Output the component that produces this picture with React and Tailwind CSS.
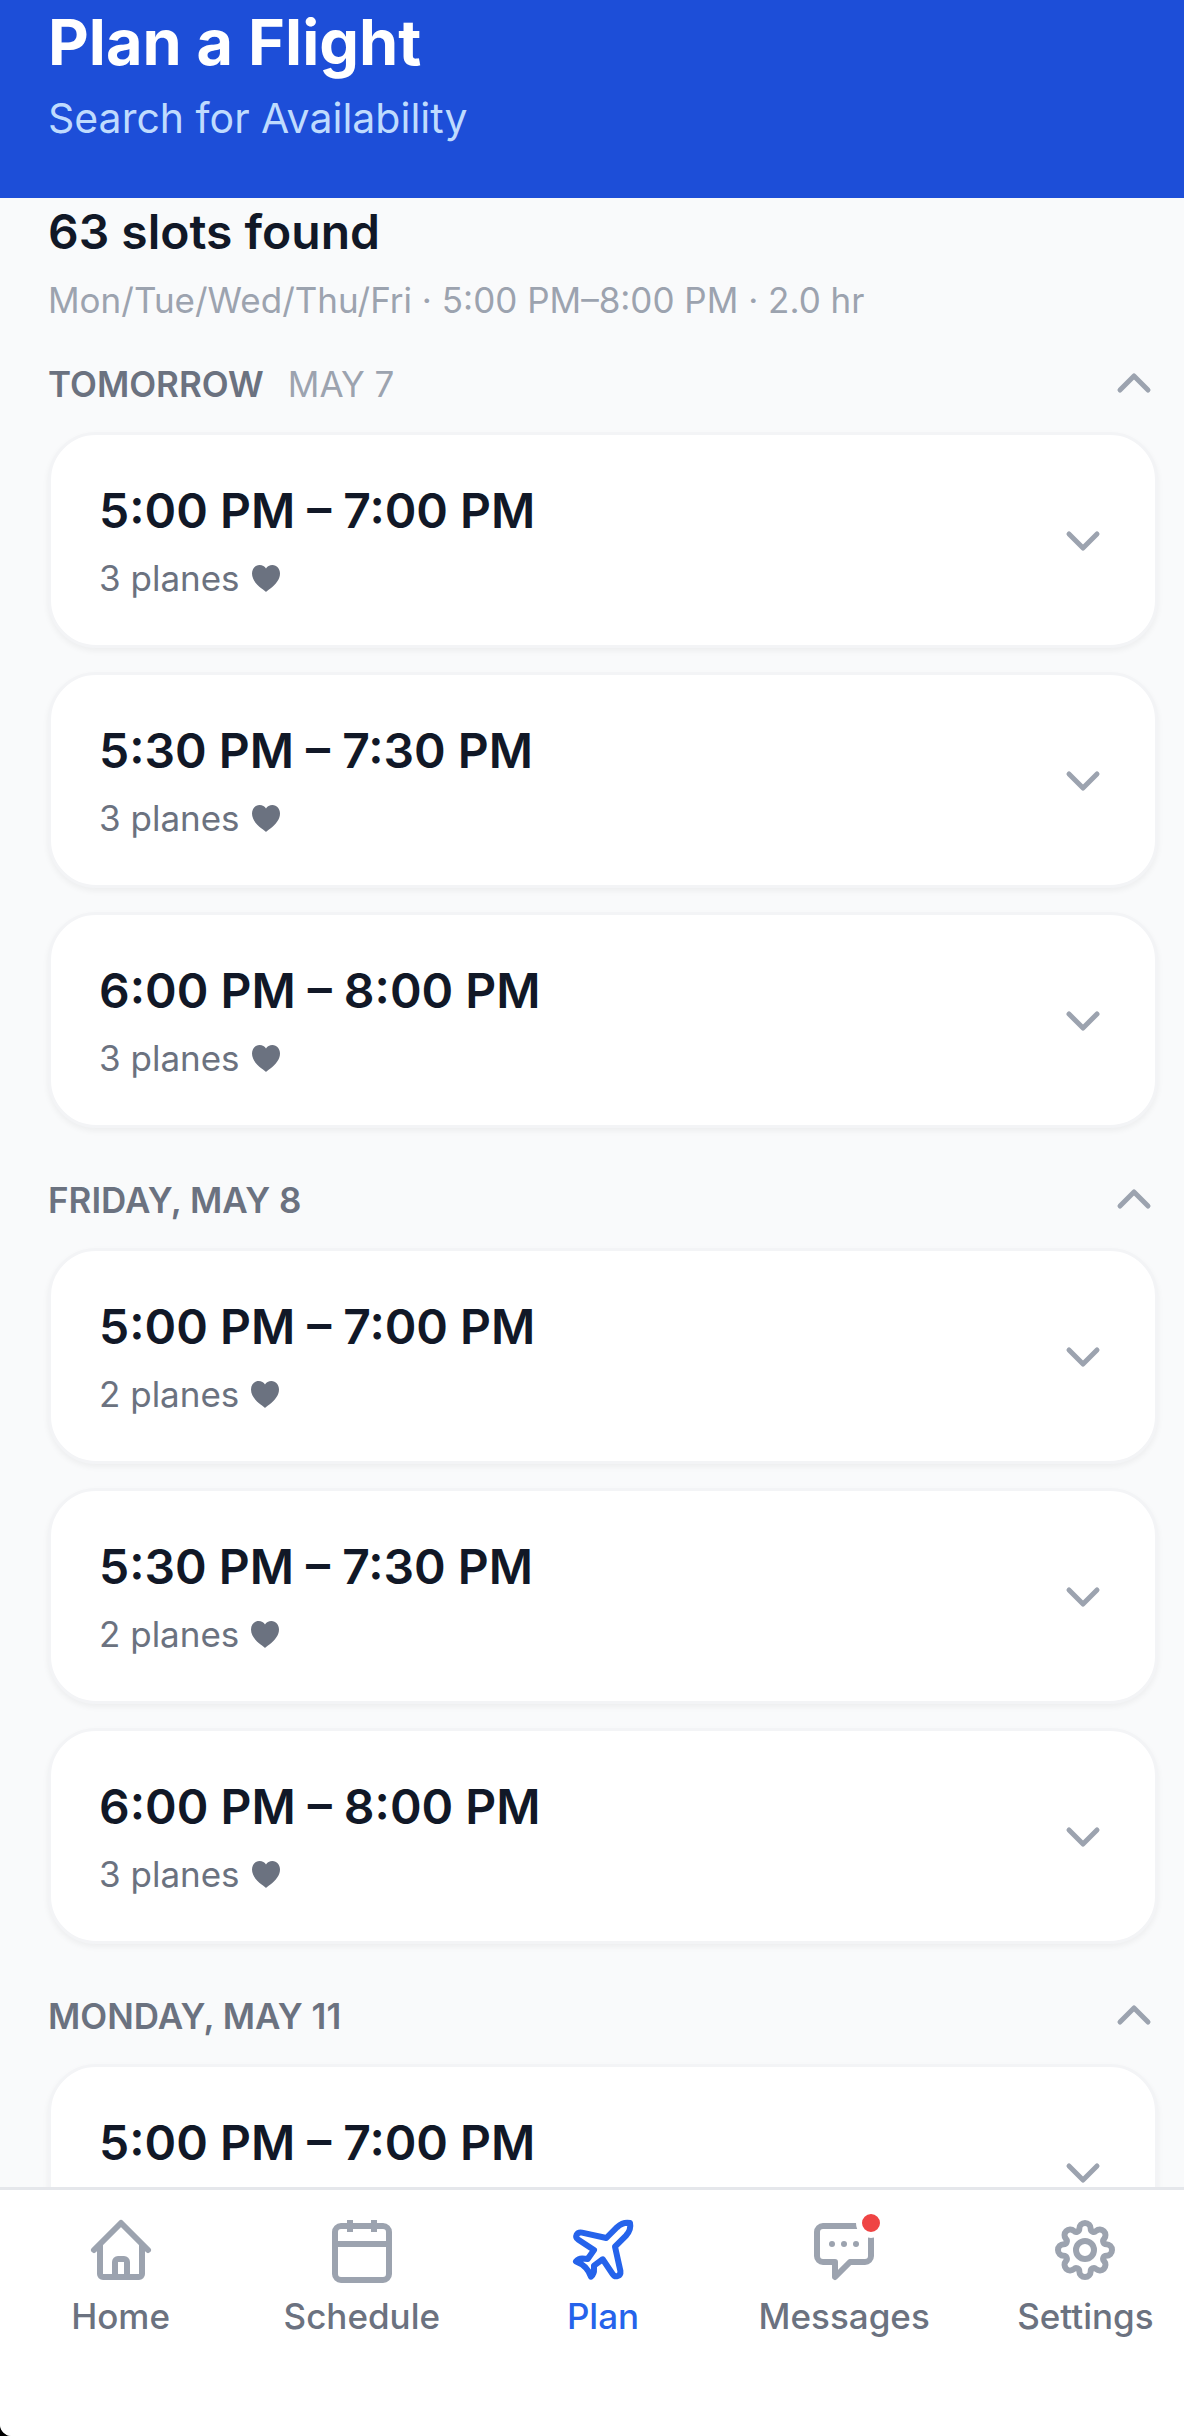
import React, { useState } from "react";

const days = [
    {
        title: "Tomorrow",
        note: "May 7",
        slots: [
            { time: "5:00 PM – 7:00 PM", planes: 3 },
            { time: "5:30 PM – 7:30 PM", planes: 3 },
            { time: "6:00 PM – 8:00 PM", planes: 3 },
        ],
    },
    {
        title: "Friday, May 8",
        slots: [
            { time: "5:00 PM – 7:00 PM", planes: 2 },
            { time: "5:30 PM – 7:30 PM", planes: 2 },
            { time: "6:00 PM – 8:00 PM", planes: 3 },
        ],
    },
    {
        title: "Monday, May 11",
        slots: [{ time: "5:00 PM – 7:00 PM", planes: 3 }],
    },
];

const Icon = ({ children }) => (
    <svg
        viewBox="0 0 24 24"
        className="size-18"
        fill="none"
        stroke="currentColor"
        strokeWidth="2"
        strokeLinejoin="round"
        aria-hidden="true"
    >
        {children}
    </svg>
);

const HomeIcon = () => (
    <Icon>
        <path strokeLinecap="round" d="M3 12l9-9 9 9" />
        <path d="M5 10v10a1 1 0 0 0 1 1h12a1 1 0 0 0 1-1V10" />
        <path d="M10 21v-5a1 1 0 0 1 1-1h2a1 1 0 0 1 1 1v5" />
    </Icon>
);

const ScheduleIcon = () => (
    <Icon>
        <rect x="3" y="4" width="18" height="18" rx="2" />
        <path d="M3 10h18M8 2v4M16 2v4" />
    </Icon>
);

const PlanIcon = () => (
    <Icon>
        <path d="M13.1 8L5 6.2C3.2 5.9 2.4 7.7 3.8 8.6L9 12L6.9 15L5 14.8C4.2 14.8 3.5 15.2 3 15.8C5.6 16.8 7.1 18.2 8 20.9C8.7 20.2 9.1 19.4 9 18.3V17.2L11.9 15.1L15.2 20C16.1 21.4 18 20.7 17.8 19L16 10.9L19.6 7.3C20.9 5.9 21.3 4.3 21 3C19.5 2.7 18.1 3.1 16.7 4.4Z" />
    </Icon>
);

const MessagesIcon = () => (
    <Icon>
        <path d="M5 4h14a2 2 0 0 1 2 2v8a2 2 0 0 1-2 2h-5l-5 5v-5H5a2 2 0 0 1-2-2V6a2 2 0 0 1 2-2z" />
        <g fill="currentColor" stroke="none">
            <circle cx="8" cy="10" r="1" />
            <circle cx="12" cy="10" r="1" />
            <circle cx="16" cy="10" r="1" />
        </g>
    </Icon>
);

const SettingsIcon = () => (
    <Icon>
        <path d="M10.1 4.9A1.9 1.9 0 0 1 13.9 4.9A1.04 1.04 0 0 0 15.68 5.64A1.9 1.9 0 0 1 18.36 8.32A1.04 1.04 0 0 0 19.1 10.1A1.9 1.9 0 0 1 19.1 13.9A1.04 1.04 0 0 0 18.36 15.68A1.9 1.9 0 0 1 15.68 18.36A1.04 1.04 0 0 0 13.9 19.1A1.9 1.9 0 0 1 10.1 19.1A1.04 1.04 0 0 0 8.32 18.36A1.9 1.9 0 0 1 5.64 15.68A1.04 1.04 0 0 0 4.9 13.9A1.9 1.9 0 0 1 4.9 10.1A1.04 1.04 0 0 0 5.64 8.32A1.9 1.9 0 0 1 8.32 5.64A1.04 1.04 0 0 0 10.1 4.9Z" />
        <circle cx="12" cy="12" r="3" />
    </Icon>
);

const Chevron = ({ up }) => (
    <svg
        viewBox="0 0 24 24"
        className="size-12 shrink-0 text-[#9ca3af]"
        fill="none"
        stroke="currentColor"
        strokeWidth="2.5"
        strokeLinecap="round"
        strokeLinejoin="round"
        aria-hidden="true"
    >
        <path d={up ? "M5 15l7-7 7 7" : "M5 9l7 7 7-7"} />
    </svg>
);

const Heart = () => (
    <svg viewBox="0 0 28 27" className="h-[27px] w-7" fill="currentColor" aria-hidden="true">
        <path d="M14 27C13.2 26.2 11.6 25.2 9.6 23.6C4.2 19.4 0 14.4 0 8.6C0 3.6 3.2 0 7.6 0C10.4 0 12.8 1.3 14 3.5C15.2 1.3 17.6 0 20.4 0C24.8 0 28 3.6 28 8.6C28 14.4 23.8 19.4 18.4 23.6C16.4 25.2 14.8 26.2 14 27Z" />
    </svg>
);

const tabs = [
    { label: "Home", icon: HomeIcon },
    { label: "Schedule", icon: ScheduleIcon },
    { label: "Plan", icon: PlanIcon },
    { label: "Messages", icon: MessagesIcon, badge: true },
    { label: "Settings", icon: SettingsIcon },
];

function SlotCard({ slot }) {
    return (
        <button className="flex w-full items-center justify-between rounded-[48px] border-3 border-[#f3f4f6] bg-white px-12 py-10 text-left shadow-[0_3px_6px_rgba(0,0,0,0.05)]">
            <span className="flex flex-col gap-1">
                <span className="text-[48px] leading-[72px] font-semibold text-[#111827]">
                    {slot.time}
                </span>
                <span className="flex items-center gap-3 text-[35px] leading-[54px] text-[#6b7280]">
                    {slot.planes} planes
                    <Heart />
                </span>
            </span>
            <Chevron />
        </button>
    );
}

function DaySection({ day }) {
    const [open, setOpen] = useState(true);

    return (
        <section className="flex flex-col gap-6">
            <button
                onClick={() => setOpen(!open)}
                className="flex w-full items-center justify-between text-[35px] leading-[48px] uppercase"
            >
                <span className="flex gap-6">
                    <span className="font-semibold text-[#6b7280]">{day.title}</span>
                    {day.note && <span className="text-[#9ca3af]">{day.note}</span>}
                </span>
                <Chevron up={open} />
            </button>
            {open && day.slots.map((slot) => <SlotCard key={slot.time} slot={slot} />)}
        </section>
    );
}

function App() {
    const [active, setActive] = useState("Plan");

    return (
        <div className="bg-black font-['Inter',sans-serif]">
            <div className="flex h-screen flex-col overflow-hidden rounded-bl-xl bg-[#f9fafb]">
                {/* Header */}
                <header className="bg-[#1d4ed8] px-12 pt-1.5 pb-[50px]">
                    <h1 className="text-[63px] leading-[72px] font-bold text-white">Plan a Flight</h1>
                    <p className="mt-2.5 text-[41px] leading-[60px] text-[#bfdbfe]">
                        Search for Availability
                    </p>
                </header>

                {/* Results */}
                <main className="min-h-0 flex-1 overflow-hidden pt-1.5 pr-[26px] pl-12">
                    <h2 className="text-[48px] leading-[56px] font-semibold text-[#111827]">
                        63 slots found
                    </h2>
                    <p className="mt-4 text-[35px] leading-[48px] text-[#9ca3af]">
                        Mon/Tue/Wed/Thu/Fri · 5:00 PM–8:00 PM · 2.0 hr
                    </p>
                    <div className="mt-9 flex flex-col gap-12">
                        {days.map((day) => (
                            <DaySection key={day.title} day={day} />
                        ))}
                    </div>
                </main>

                {/* Bottom tabs */}
                <nav className="-mr-[22px] grid grid-cols-5 border-t-3 border-[#e5e7eb] bg-white pt-6 pb-24">
                    {tabs.map(({ label, icon: TabIcon, badge }) => (
                        <button
                            key={label}
                            onClick={() => setActive(label)}
                            className={`flex flex-col items-center gap-1.5 ${
                                active === label ? "text-[#2563eb]" : "text-[#9ca3af]"
                            }`}
                        >
                            <span className="relative">
                                <TabIcon />
                                {badge && (
                                    <span className="absolute -top-1.5 -right-1.5 size-[30px] rounded-full border-6 border-white bg-[#ef4444]" />
                                )}
                            </span>
                            <span
                                className={`text-[35px] leading-[48px] font-medium ${
                                    active === label ? "text-[#2563eb]" : "text-[#6b7280]"
                                }`}
                            >
                                {label}
                            </span>
                        </button>
                    ))}
                </nav>
            </div>
        </div>
    );
}

export default App;
